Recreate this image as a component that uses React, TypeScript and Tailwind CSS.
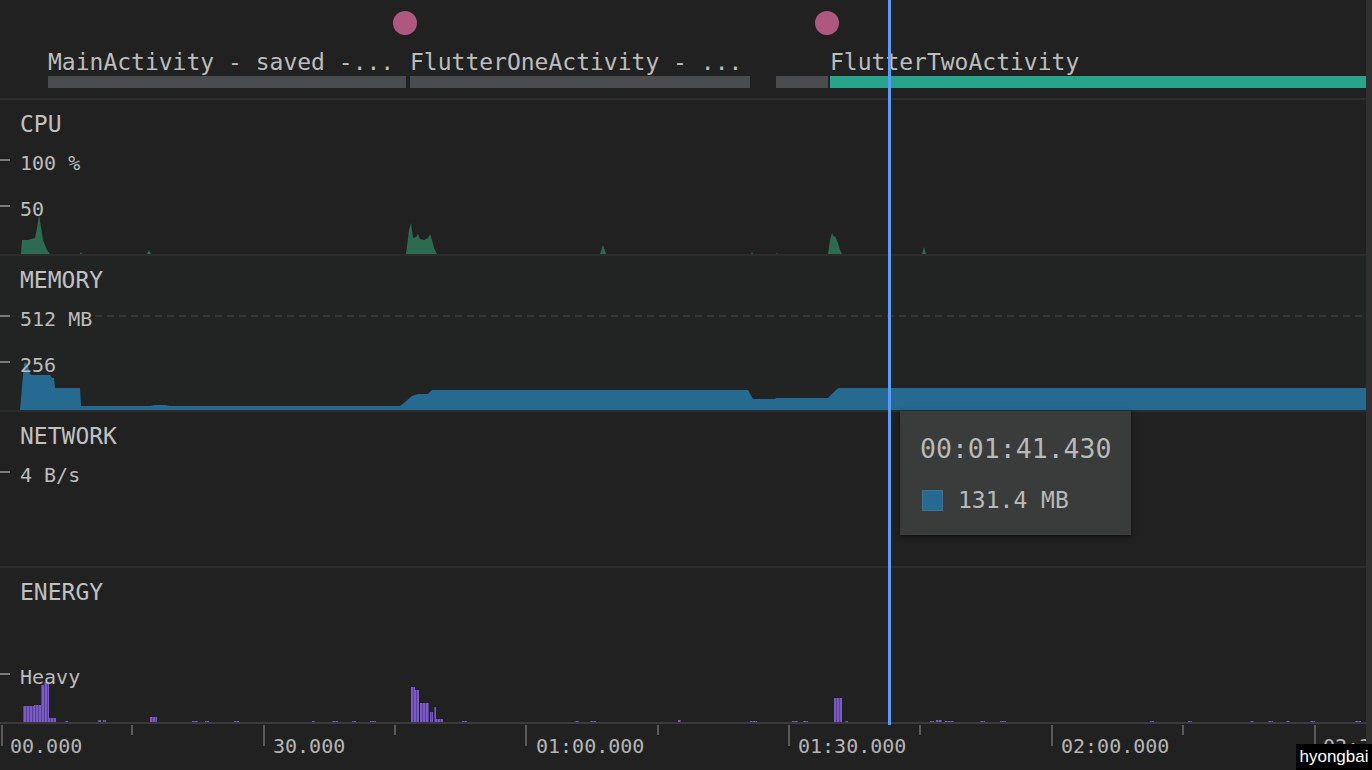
import type { ReactNode } from 'react';

type Seg = { label: string; width: string; gap: string; color: string };

const segments: Seg[] = [
  { label: 'MainActivity - saved -...', width: 'w-[358px]', gap: 'ml-0', color: 'bg-[#4b4c4d]' },
  { label: 'FlutterOneActivity - ...', width: 'w-[340px]', gap: 'ml-[4px]', color: 'bg-[#4b4c4d]' },
  { label: '', width: 'w-[52px]', gap: 'ml-[26px]', color: 'bg-[#4b4c4d]' },
  { label: 'FlutterTwoActivity', width: 'flex-1', gap: 'ml-[2px]', color: 'bg-[#28a38c]' },
];

// cpu samples, track-local coords (track is 154 tall)
const cpuPath =
  'M21 154 L22 140 L28 140 L31 139 L35 138 L37 128 L39 115 L41 127 L43 140 L47 150 L50 154 Z ' +
  'M80 154 L81 152 L82 154 Z M147 154 L149 150 L151 154 Z ' +
  'M406 154 L409 130 L411 123 L413 138 L416 137 L418 134 L420 139 L424 140 L428 138 L430 134 L432 140 L434 148 L437 154 Z ' +
  'M600 154 L603 145 L606 154 Z M751 154 L752 152 L753 154 Z M776 154 L777 153 L778 154 Z ' +
  'M828 154 L830 140 L832 133 L834 137 L835 136 L838 143 L840 150 L842 154 Z ' +
  'M922 154 L924 147 L926 154 Z';

const memPath =
  'M20 154 L24 108 L26 106 L28 110 L30 118 L32 119 L50 119 L52 122 L54 122 L55 132 L80 132 L81 150 L150 150 L155 149 L165 149 L170 150 ' +
  'L400 150 L405 146 L412 140 L418 138 L428 138 L432 134 L748 134 L753 143 L775 143 L776 142 L828 142 L832 138 L836 134 L839 132 L1366 132 L1366 154 Z';

// energy bars: [x, width, top] in track-local coords
const energyBars: [number, number, number][] = [
  [23, 11, 138], [34, 7, 137], [41, 3, 117], [44, 5, 114], [49, 7, 150], [65, 3, 153], [98, 3, 152], [103, 3, 152],
  [150, 7, 149], [192, 6, 153], [205, 4, 153], [234, 5, 153], [312, 3, 153], [332, 6, 153], [352, 4, 153], [370, 6, 153],
  [411, 4, 119], [415, 4, 122], [420, 9, 135], [430, 3, 144], [434, 2, 139], [436, 7, 151],
  [462, 5, 153], [575, 4, 153], [590, 6, 153], [678, 3, 152], [750, 7, 153], [792, 6, 153], [803, 5, 153],
  [834, 8, 130], [845, 3, 153], [930, 4, 153], [936, 6, 152], [945, 9, 153], [980, 5, 153], [1000, 6, 153],
  [1150, 4, 153], [1188, 4, 153], [1250, 4, 153], [1268, 5, 153], [1286, 4, 153], [1310, 5, 153], [1355, 6, 153],
];

const majors = [
  { x: 'left-[1px]', lx: 'left-[10px]', t: '00.000' },
  { x: 'left-[263px]', lx: 'left-[273px]', t: '30.000' },
  { x: 'left-[525px]', lx: 'left-[536px]', t: '01:00.000' },
  { x: 'left-[788px]', lx: 'left-[798px]', t: '01:30.000' },
  { x: 'left-[1051px]', lx: 'left-[1061px]', t: '02:00.000' },
  { x: 'left-[1314px]', lx: 'left-[1323px]', t: '02:30.000' },
];
const minors = ['left-[131px]', 'left-[394px]', 'left-[657px]', 'left-[919px]', 'left-[1182px]'];

function ValueRow({ label, className }: { label?: string; className: string }) {
  return (
    <div className={`relative flex h-[24px] items-start ${className}`}>
      {label && (
        <>
          <div className="mt-[8px] h-[2px] w-[10px] bg-[#7a7a7a]" />
          <span className="ml-[10px] text-[20px] leading-[24px] whitespace-pre">{label}</span>
        </>
      )}
    </div>
  );
}

function Track({
  title,
  top,
  bottom,
  chart,
  className,
}: {
  title: string;
  top?: string;
  bottom?: string;
  chart?: ReactNode;
  className: string;
}) {
  return (
    <div className={`relative h-[156px] border-b-2 ${className}`}>
      {chart && (
        <svg className="absolute left-0 top-0" width={1366} height={154} viewBox="0 0 1366 154">
          {chart}
        </svg>
      )}
      <div className="relative pl-[20px] pt-[10px] text-[23px] leading-[28px] text-[#c0c0c0]">{title}</div>
      <ValueRow label={top} className="mt-[13px]" />
      <ValueRow label={bottom} className="mt-[22px]" />
    </div>
  );
}

export default function App() {
  return (
    <div className="relative flex h-[770px] w-[1372px] overflow-hidden bg-[#212121] font-['DejaVu_Sans_Mono',monospace] text-[#bcbcbc]">
      <div className="flex w-[1366px] flex-col overflow-hidden">
        {/* Activity lane */}
        <div className="relative h-[100px] border-b-2 border-[#2c2c2c]">
          <div className="absolute left-[393px] top-[11px] h-[24px] w-[24px] rounded-full bg-[#ae5880]" />
          <div className="absolute left-[815px] top-[11px] h-[24px] w-[24px] rounded-full bg-[#ae5880]" />
          <div className="flex pl-[48px] pt-[48px]">
            {segments.map((s, i) => (
              <div key={i} className={`${s.width} ${s.gap} min-w-0`}>
                <div className="h-[28px] overflow-visible whitespace-pre text-[23px] leading-[28px] text-[#bdbdbd]">{s.label}</div>
                <div className={`h-[12px] ${s.color}`} />
              </div>
            ))}
          </div>
        </div>

        <Track
          title="CPU"
          top="100 %"
          bottom="50"
          className="border-[#2c2c2c]"
          chart={<path d={cpuPath} fill="#2e6a51" />}
        />

        <Track
          title="MEMORY"
          top="512 MB"
          bottom="256"
          className="border-[#2c2c2c] bg-[#222323]"
          chart={
            <>
              <line x1={95} y1={60} x2={1366} y2={60} stroke="#3c3c3c" strokeWidth={1.5} strokeDasharray="7 5" />
              <path d={memPath} fill="#266a92" />
            </>
          }
        />

        <Track title="NETWORK" top="4 B/s" className="border-[#2c2c2c]" />

        <Track
          title="ENERGY"
          bottom="Heavy"
          className="border-[#3a3a3a]"
          chart={
            <>
              <defs>
                <pattern id="stripes" width={3} height={4} patternUnits="userSpaceOnUse">
                  <rect width={2} height={4} fill="#7a5bc6" />
                  <rect x={2} width={1} height={4} fill="#56418f" />
                </pattern>
              </defs>
              {energyBars.map(([x, w, t], i) => (
                <rect key={i} x={x} y={t} width={w} height={154 - t} fill="url(#stripes)" />
              ))}
            </>
          }
        />

        {/* Time axis */}
        <div className="relative flex-1 overflow-hidden">
          {majors.map((m) => (
            <div key={m.t}>
              <div className={`absolute ${m.x} top-[1px] h-[21px] w-[2px] bg-[#5a5a5a]`} />
              <div className={`absolute ${m.lx} top-[10px] whitespace-pre text-[20px] leading-[24px] text-[#b5b5b5]`}>{m.t}</div>
            </div>
          ))}
          {minors.map((x) => (
            <div key={x} className={`absolute ${x} top-[1px] h-[10px] w-[2px] bg-[#5a5a5a]`} />
          ))}
        </div>
      </div>

      <div className="w-[6px] bg-[#303030]" />

      {/* Cursor */}
      <div className="absolute left-[888px] top-0 h-[725px] w-[3px] bg-[#5b9cf7]" />

      {/* Tooltip */}
      <div className="absolute left-[900px] top-[411px] h-[124px] w-[231px] bg-[#3a3b3b] pl-[20px] pt-[22px] shadow-[0_2px_6px_rgba(0,0,0,0.45)]">
        <div className="text-[26.5px] leading-[32px] text-[#b9b9b9]">00:01:41.430</div>
        <div className="mt-[21px] flex h-[28px] items-center">
          <div className="ml-[2px] h-[21px] w-[21px] border border-[#3f7090] bg-[#266a92]" />
          <span className="ml-[15px] text-[23px] leading-[28px] text-[#b9b9b9]">131.4 MB</span>
        </div>
      </div>

      {/* Watermark */}
      <div className="absolute bottom-0 right-0 h-[26px] w-[76px] bg-black text-center font-['Liberation_Sans',sans-serif] text-[17px] leading-[26px] text-white">
        hyongbai
      </div>
    </div>
  );
}
